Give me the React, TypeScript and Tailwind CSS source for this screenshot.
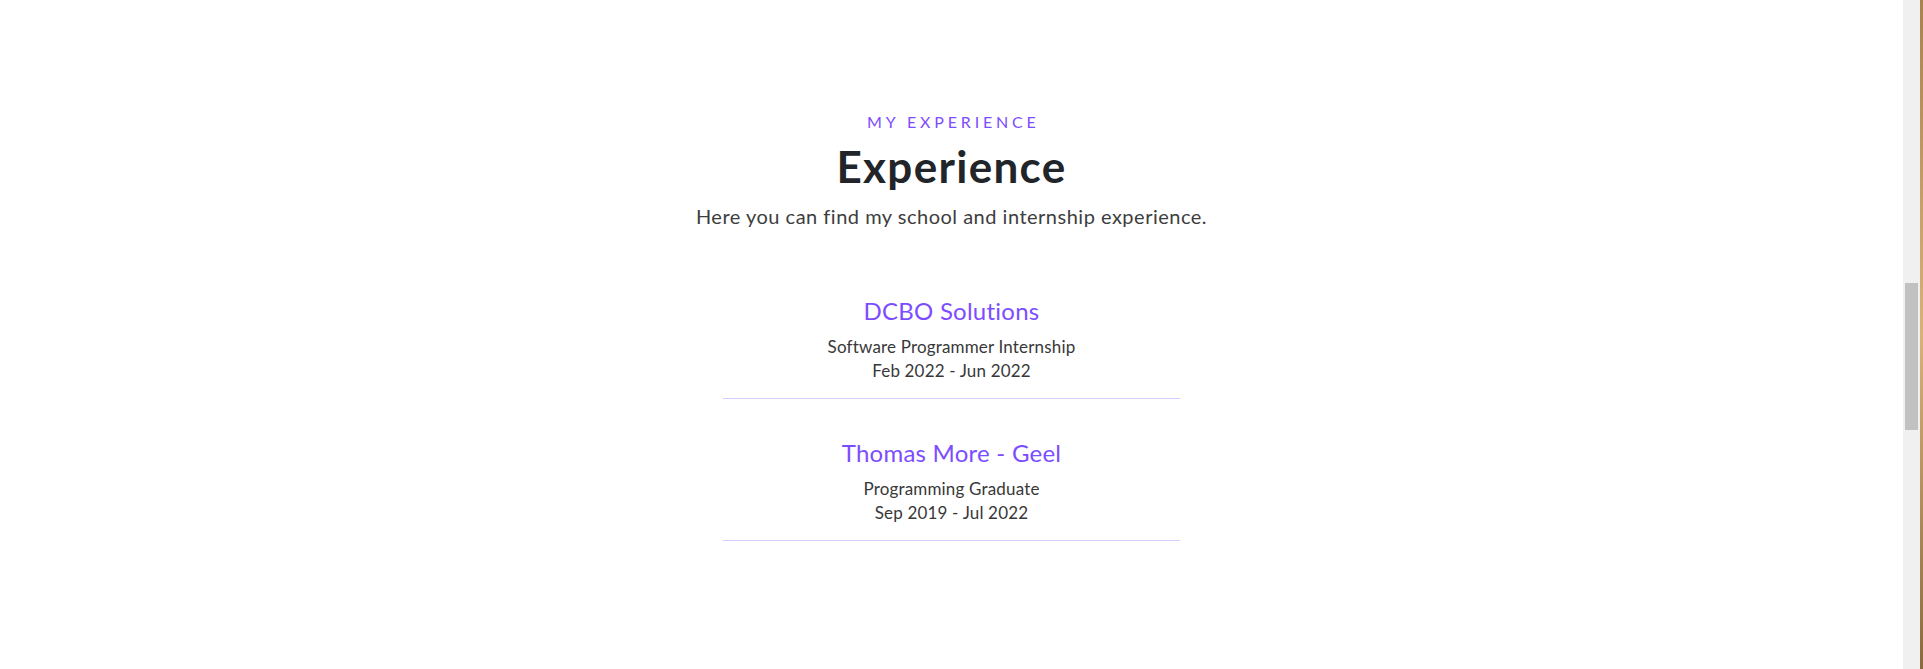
import React from "react";

type Job = {
  company: string;
  role: string;
  period: string;
};

const jobs: Job[] = [
  { company: "DCBO Solutions", role: "Software Programmer Internship", period: "Feb 2022 - Jun 2022" },
  { company: "Thomas More - Geel", role: "Programming Graduate", period: "Sep 2019 - Jul 2022" },
];

const ExperienceItem = ({ job }: { job: Job }) => {
  return (
    <div className="flex flex-col items-center border-b border-[#d6ceff] pb-[15px]">
      <h3 className="text-[24px] leading-[34px] tracking-[0.01em] text-[#7c4dff]">{job.company}</h3>
      <p className="mt-[7px] text-[17px] leading-[24px] tracking-[0.01em] text-[#383838]">{job.role}</p>
      <p className="text-[17px] leading-[24px] tracking-[0.01em] text-[#383838]">{job.period}</p>
    </div>
  );
};

export default function App() {
  return (
    <div className="flex h-[669px] w-full overflow-hidden bg-white" style={{ fontFamily: "Lato, 'Open Sans', sans-serif" }}>
      {/* page content */}
      <main className="flex flex-1 flex-col items-center pt-[110px]">
        <span className="pl-[0.24em] text-[16px] leading-[24px] tracking-[0.24em] text-[#7c4dff] uppercase">My Experience</span>
        <h2 className="mt-[6px] text-[44px] leading-[52px] font-bold tracking-[0.03em] text-[#212529]">Experience</h2>
        <p className="mt-[10px] text-[20px] leading-[28px] tracking-[0.025em] text-[#3d3d3d]">
          Here you can find my school and internship experience.
        </p>

        {/* timeline list */}
        <div className="mt-[64px] flex w-[457px] flex-col gap-[37px]">
          {jobs.map((job) => (
            <ExperienceItem key={job.company} job={job} />
          ))}
        </div>
      </main>

      {/* scrollbar */}
      <div className="flex w-[17px] flex-col bg-[#f0f0f0] px-[2px] pt-[283px]">
        <div className="h-[147px] w-full bg-[#c1c1c1]" />
      </div>
      <div className="w-[3px] bg-gradient-to-b from-[#a8824e] via-[#d9b27a] to-[#8a6a3e]" />
    </div>
  );
}
